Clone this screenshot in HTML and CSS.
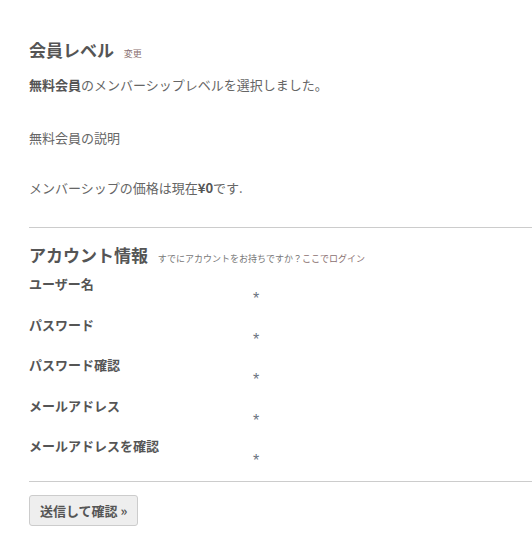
FILE: index.html
```html
<!DOCTYPE html>
<html lang="ja">
<head>
<meta charset="utf-8">
<title>チェックアウト</title>
<link rel="stylesheet" href="styles.css">
</head>
<body>
<div class="checkout">
  <section class="level">
    <h2 class="heading">会員レベル <span class="small"><a class="link" href="#">変更</a></span></h2>
    <p class="chosen"><strong>無料会員</strong>のメンバーシップレベルを選択しました。</p>
    <p class="desc">無料会員の説明</p>
    <p class="price">メンバーシップの価格は現在<strong>¥0</strong>です.</p>
  </section>
  <hr class="rule">
  <section class="account">
    <h2 class="heading">アカウント情報 <span class="small">すでにアカウントをお持ちですか？<a class="link" href="#">ここでログイン</a></span></h2>
    <div class="field"><label class="label">ユーザー名</label><span class="req">*</span></div>
    <div class="field"><label class="label">パスワード</label><span class="req">*</span></div>
    <div class="field"><label class="label">パスワード確認</label><span class="req">*</span></div>
    <div class="field"><label class="label">メールアドレス</label><span class="req">*</span></div>
    <div class="field"><label class="label">メールアドレスを確認</label><span class="req">*</span></div>
  </section>
  <hr class="rule rule-bottom">
  <div class="submit">
    <button class="button" type="button">送信して確認 &raquo;</button>
  </div>
</div>
</body>
</html>
```

FILE: styles.css
```css
html, body {
  margin: 0;
  padding: 0;
  background: #fff;
}
body {
  font-family: "Noto Sans CJK JP", "Noto Sans", sans-serif;
  font-size: 13px;
  color: #666;
}
.checkout {
  padding: 38px 0 0 29px;
}
.heading {
  margin: 0;
  font-size: 17px;
  line-height: 24px;
  font-weight: bold;
  color: #555;
}
.small {
  font-size: 9px;
  line-height: 0;
  font-weight: normal;
  color: #777;
  margin-left: 6px;
}
.link {
  color: #8a7070;
  text-decoration: none;
}
.chosen {
  margin: 13px 0 0;
  line-height: 20px;
}
.chosen strong {
  color: #555;
}
.desc {
  margin: 32.5px 0 0;
  line-height: 20px;
}
.price {
  margin: 30.5px 0 0;
  line-height: 20px;
}
.price strong {
  color: #555;
}
.rule {
  border: 0;
  border-top: 1px solid #ccc;
  margin: 29px 0 0;
  height: 0;
}
.account {
  padding-top: 14.5px;
}
.field {
  margin-top: 7.5px;
  height: 33px;
}
.label {
  display: block;
  font-weight: bold;
  color: #555;
  line-height: 20px;
}
.req {
  display: block;
  margin-left: 224px;
  margin-top: -1px;
  font-family: "Liberation Sans", sans-serif;
  font-size: 16px;
  line-height: 12px;
  color: #6a7380;
}
.rule-bottom {
  margin-top: 12px;
}
.submit {
  padding-top: 13px;
}
.button {
  font-family: "Noto Sans CJK JP", "Noto Sans", sans-serif;
  font-size: 13px;
  font-weight: bold;
  color: #555;
  background: #eee;
  border: 1px solid #ccc;
  border-radius: 3px;
  padding: 0 10px;
  height: 31px;
  line-height: 29px;
  cursor: pointer;
}
```
